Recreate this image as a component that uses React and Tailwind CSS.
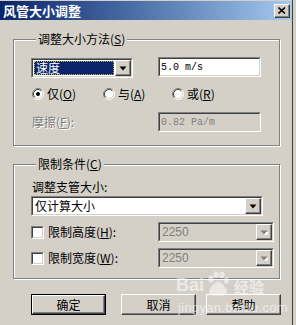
import React from 'react';

const sunkenOuter = 'border border-t-[#808080] border-l-[#808080] border-r-white border-b-white';
const sunkenInner = 'border border-t-[#404040] border-l-[#404040] border-r-[#d4d0c8] border-b-[#d4d0c8]';
const raised = 'border border-t-white border-l-white border-r-[#404040] border-b-[#404040] shadow-[inset_-1px_-1px_0_#808080]';

const U = ({ children }) => <span className="underline underline-offset-1">{children}</span>;

const Arrow = ({ disabled }) => (
  <svg width="8" height="5" viewBox="0 0 8 5">
    {disabled && <polygon points="2,2 9,2 5.5,6" fill="#fff" />}
    <polygon points="0.5,0.5 7.5,0.5 4,4.5" fill={disabled ? '#808080' : '#000'} />
  </svg>
);

const Combo = ({ className, text, selected, disabled }) => (
  <div className={`h-[20px] ${sunkenOuter} ${className}`}>
    <div className={`flex h-full ${sunkenInner} ${disabled ? 'bg-[#d4d0c8]' : 'bg-white'}`}>
      <div className="flex-1 flex items-center p-[1px]">
        {selected ? (
          <div className="h-full w-full bg-[#0a246a] text-white outline-1 outline-dotted outline-[#c8b45a] -outline-offset-1 flex items-center pl-[2px]">
            {text}
          </div>
        ) : (
          <span className={disabled ? "pl-[1px] text-[#808080] font-['Liberation_Sans',sans-serif] text-[12px]" : 'pl-[1px]'}>{text}</span>
        )}
      </div>
      <div className={`w-[16px] h-full flex items-center justify-center bg-[#d4d0c8] ${raised}`}>
        <Arrow disabled={disabled} />
      </div>
    </div>
  </div>
);

const TextBox = ({ text, disabled }) => (
  <div className={`w-[103px] h-[20px] ${sunkenOuter}`}>
    <div className={`h-full flex items-center pl-[1px] ${sunkenInner} ${disabled ? 'bg-[#d4d0c8] text-[#808080]' : 'bg-white text-black'} font-['Liberation_Mono',monospace] text-[10px]`}>
      {text}
    </div>
  </div>
);

const Radio = ({ checked }) => (
  <svg width="12" height="12" viewBox="0 0 12 12" className="shrink-0">
    <circle cx="6" cy="6" r="5" fill="#fff" />
    <path d="M2.11 9.89A5.5 5.5 0 0 1 9.89 2.11" stroke="#808080" fill="none" />
    <path d="M9.89 2.11A5.5 5.5 0 0 1 2.11 9.89" stroke="#fff" fill="none" />
    <path d="M2.82 9.18A4.5 4.5 0 0 1 9.18 2.82" stroke="#404040" fill="none" />
    <path d="M9.18 2.82A4.5 4.5 0 0 1 2.82 9.18" stroke="#d4d0c8" fill="none" />
    {checked && <circle cx="6" cy="6" r="2" fill="#000" />}
  </svg>
);

const Check = () => (
  <div className={`w-[13px] h-[13px] shrink-0 ${sunkenOuter}`}>
    <div className={`h-full bg-white ${sunkenInner}`} />
  </div>
);

const Button = ({ children, isDefault, className = '' }) => (
  <div className={`w-[75px] h-[21px] ${isDefault ? 'border border-black' : ''} ${className}`}>
    <div className={`h-full flex items-center justify-center bg-[#d4d0c8] ${raised}`}>{children}</div>
  </div>
);

const Group = ({ label, className, children }) => (
  <fieldset className={`ml-[13px] w-[267px] border border-[#808080] shadow-[inset_1px_1px_0_#fff,1px_1px_0_#fff] pl-[17px] ${className}`}>
    <legend className="ml-[5px] px-[2px] leading-[14px] bg-[#d4d0c8]">{label}</legend>
    {children}
  </fieldset>
);

export default function App() {
  return (
    <div className="w-[296px] h-[325px] bg-[#d4d0c8] relative overflow-hidden font-['Noto_Sans_CJK_SC',sans-serif] text-[12px] text-black">
      <div className="w-[293px] h-full border-r border-[#404040] pt-[1px]">
        {/* title bar */}
        <div className="h-[19px] flex items-center justify-between pl-[3px] pr-[2px] bg-gradient-to-r from-[#0a246a] to-[#a6caf0]">
          <span className="text-white font-bold text-[13px] leading-none">风管大小调整</span>
          <div className={`w-[16px] h-[14px] flex items-center justify-center bg-[#d4d0c8] ${raised}`}>
            <svg width="8" height="7" viewBox="0 0 8 7">
              <path d="M0.5 0.5L7 6.5M7 0.5L0.5 6.5" stroke="#000" strokeWidth="1.6" />
            </svg>
          </div>
        </div>

        <Group label={<>调整大小方法(<U>S</U>)</>} className="mt-[12px] pb-[13px]">
          <div className="mt-[11px] flex items-start gap-[25px]">
            <Combo className="w-[102px] mt-[1px]" text="速度" selected />
            <TextBox text="5.0 m/s" />
          </div>
          <div className="mt-[9px] h-[14px] flex items-center pl-[1px]">
            <div className="w-[71px] flex items-center gap-[3px]"><Radio checked /><span>仅(<U>O</U>)</span></div>
            <div className="w-[69px] flex items-center gap-[3px]"><Radio /><span>与(<U>A</U>)</span></div>
            <div className="flex items-center gap-[3px]"><Radio /><span>或(<U>R</U>)</span></div>
          </div>
          <div className="mt-[11px] flex items-center">
            <span className="w-[127px] pl-[1px] text-[#808080] [text-shadow:1px_1px_0_#fff]">摩擦(<U>F</U>):</span>
            <TextBox text="0.82 Pa/m" disabled />
          </div>
        </Group>

        <Group label={<>限制条件(<U>C</U>)</>} className="mt-[11px] pb-[10px]">
          <div className="mt-[9px] pl-[1px] leading-[14px]">调整支管大小:</div>
          <Combo className="w-[232px] mt-[2px]" text="仅计算大小" />
          <div className="mt-[6px] h-[20px] flex items-center">
            <div className="w-[127px] flex items-center gap-[4px]"><Check /><span>限制高度(<U>H</U>):</span></div>
            <Combo className="w-[116px]" text="2250" disabled />
          </div>
          <div className="mt-[6px] h-[20px] flex items-center">
            <div className="w-[127px] flex items-center gap-[4px]"><Check /><span>限制宽度(<U>W</U>):</span></div>
            <Combo className="w-[116px]" text="2250" disabled />
          </div>
        </Group>

        <div className="mt-[15px] ml-[31px] flex">
          <Button isDefault>确定</Button>
          <Button className="ml-[15px]">取消</Button>
          <Button className="ml-[10px]">帮助</Button>
        </div>
      </div>

      {/* watermark */}
      <div className="absolute left-[176px] top-[271px] flex flex-col items-start text-white/55 pointer-events-none">
        <div className="flex items-end">
          <span className="font-['Liberation_Sans',sans-serif] font-bold text-[18px] leading-none mb-[2px]">Bai</span>
          <svg width="26" height="25" viewBox="0 0 26 25" className="opacity-55 ml-[1px]">
            <g fill="#fff">
              <ellipse cx="6" cy="8" rx="2.6" ry="3.4" />
              <ellipse cx="11" cy="3.5" rx="2.6" ry="3.2" />
              <ellipse cx="17" cy="4" rx="2.6" ry="3.2" />
              <ellipse cx="21.5" cy="9.5" rx="2.4" ry="3" />
              <path d="M13 11c-4 0-9 7-9 10s3 3.5 9 3.5 9-.5 9-3.5-5-10-9-10z" />
            </g>
          </svg>
          <span className="font-bold text-[15px] leading-none ml-[3px] mb-[2px]">经验</span>
        </div>
        <span className="font-['Liberation_Sans',sans-serif] text-[13px] leading-none mt-[5px] ml-[2px] tracking-[0.3px]">jingyan.baidu.com</span>
      </div>
    </div>
  );
}
